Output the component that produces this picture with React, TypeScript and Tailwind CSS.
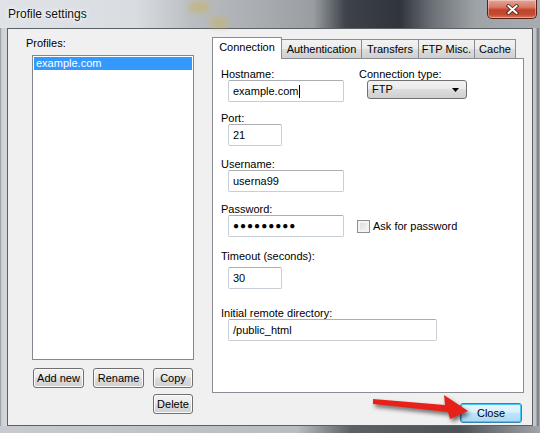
import React from 'react';

const btn =
  'h-[20px] rounded-[3px] border border-[#707070] bg-[linear-gradient(180deg,#f2f2f2_0%,#ebebeb_45%,#dddddd_50%,#cfcfcf_100%)] text-[11px] leading-[18px] text-black flex items-center justify-center shadow-[inset_0_0_0_1px_#fbfbfb]';

const input =
  'h-[22px] rounded-[2px] border border-[#c8ced6] border-t-[#abadb3] bg-white pl-[4px] flex items-center text-[11px] text-black';

const label = 'h-[11px] leading-[11px] text-[11px] text-black whitespace-nowrap';

const tab =
  'h-[19px] -ml-px border border-b-0 border-[#898c95] bg-[linear-gradient(180deg,#f2f2f2_0%,#ebebeb_50%,#dddddd_51%,#cfcfcf_100%)] text-[11px] flex items-center justify-center pt-px';

const App: React.FC = () => {
  return (
    <div className="relative w-[540px] h-[433px] overflow-hidden bg-[#c9ced3] font-['Liberation_Sans',Arial,sans-serif] text-black">
      {/* Title bar */}
      <div className="relative h-[28px] flex items-center pl-[8px] bg-[linear-gradient(90deg,#dfe3e7_0%,#d9dde1_25%,#b9bdc1_36%,#a9adb1_48%,#9a9ea2_58%,#3d4349_64%,#2f353b_74%,#6a7075_80%,#9ea3a8_88%,#a7acb1_100%)]">
        <div className="absolute left-[188px] top-[2px] w-[22px] h-[10px] rounded-full bg-[#c8b25a] opacity-60 blur-[3px]"></div>
        <div className="absolute left-[210px] top-[18px] w-[18px] h-[9px] rounded-full bg-[#c8b25a] opacity-60 blur-[3px]"></div>
        <span className="relative text-[12px] leading-[14px] text-[#111] [text-shadow:0_0_6px_#ffffff,0_0_3px_#ffffff]">Profile settings</span>
        {/* close X */}
        <div className="absolute left-[487px] top-0 w-[50px] h-[19px] rounded-b-[5px] border border-[#5b2118] border-t-0 bg-[linear-gradient(180deg,#e6a597_0%,#d67a66_40%,#c5432b_55%,#c24a30_80%,#d87a5e_100%)] flex items-center justify-center shadow-[inset_0_0_0_1px_rgba(255,255,255,0.35)]">
          <svg width="13" height="11" viewBox="0 0 13 11">
            <path d="M2.5 2 L10.5 9 M10.5 2 L2.5 9" stroke="#4a1a12" strokeWidth="3.6" strokeLinecap="square" />
            <path d="M2.5 2 L10.5 9 M10.5 2 L2.5 9" stroke="#ffffff" strokeWidth="2" strokeLinecap="square" />
          </svg>
        </div>
      </div>

      <div className="flex h-[398px]">
        {/* left frame */}
        <div className="w-[7px] bg-[linear-gradient(90deg,#8d9196_0%,#cfd3d7_25%,#d3d7db_100%)]"></div>

        {/* client area */}
        <div className="w-[526px] h-[398px] border border-[#5b6066] bg-[#f0f0f0] flex">
          {/* Profiles column */}
          <div className="ml-[18px] mt-[9px] w-[170px] flex flex-col">
            <div className={label}>Profiles:</div>
            <div className="mt-[6px] ml-[6px] w-[162px] h-[305px] border border-[#828790] bg-white p-px">
              <div className="h-[13px] bg-[#3399ff] text-white text-[11px] leading-[13px] pl-[2px]">example.com</div>
            </div>
            <div className="mt-[8px] ml-[7px] flex gap-[9px]">
              <div className={`${btn} w-[51px]`}>Add new</div>
              <div className={`${btn} w-[51px]`}>Rename</div>
              <div className={`${btn} w-[40px]`}>Copy</div>
            </div>
            <div className="mt-[6px] ml-[127px] flex">
              <div className={`${btn} w-[40px]`}>Delete</div>
            </div>
          </div>

          {/* Tabs column */}
          <div className="ml-[16px] mt-[7px] w-[312px] flex flex-col">
            <div className="flex items-end h-[22px]">
              <div className="relative z-10 w-[70px] h-[22px] mb-[-1px] border border-b-0 border-[#898c95] bg-white text-[11px] flex items-center justify-center pb-[2px]">
                Connection
              </div>
              <div className={`${tab} w-[81px]`}>Authentication</div>
              <div className={`${tab} w-[58px]`}>Transfers</div>
              <div className={`${tab} w-[57px]`}>FTP Misc.</div>
              <div className={`${tab} w-[42px]`}>Cache</div>
            </div>

            {/* Connection panel */}
            <div className="w-[312px] h-[335px] border border-[#898c95] bg-white pt-[10px] pl-[8px] flex flex-col">
              <div className="flex">
                <div className="w-[138px] flex flex-col">
                  <div className={label}>Hostname:</div>
                  <div className={`${input} ml-[7px] w-[116px] border-[#9fc3e6] border-t-[#7ea9d2]`}>
                    example.com<span className="inline-block w-px h-[13px] bg-black ml-px"></span>
                  </div>
                </div>
                <div className="flex flex-col">
                  <div className={label}>Connection type:</div>
                  <div className="ml-[8px] w-[100px] h-[19px] rounded-[3px] border border-[#707070] bg-[linear-gradient(180deg,#f2f2f2_0%,#ebebeb_45%,#dddddd_50%,#cfcfcf_100%)] flex items-center justify-between pl-[4px] pr-[6px] text-[11px]">
                    <span>FTP</span>
                    <svg width="8" height="4" viewBox="0 0 8 4">
                      <path d="M0 0 H7 L3.5 4 Z" fill="#000" />
                    </svg>
                  </div>
                </div>
              </div>

              <div className={`${label} mt-[11px]`}>Port:</div>
              <div className={`${input} ml-[7px] w-[54px]`}>21</div>

              <div className={`${label} mt-[13px]`}>Username:</div>
              <div className={`${input} ml-[7px] w-[116px]`}>userna99</div>

              <div className={`${label} mt-[12px]`}>Password:</div>
              <div className="flex items-center">
                <div className={`${input} ml-[7px] w-[116px]`}>
                  <span className="text-[10px] tracking-[1px] leading-none">●●●●●●●●●</span>
                </div>
                <div className="ml-[13px] w-[13px] h-[13px] border border-[#8e8f8f] bg-[linear-gradient(135deg,#dcdcdc_0%,#f6f6f6_100%)] shadow-[inset_0_0_0_2px_#f4f4f4]"></div>
                <span className="ml-[3px] text-[11px]">Ask for password</span>
              </div>

              <div className={`${label} mt-[14px]`}>Timeout (seconds):</div>
              <div className={`${input} ml-[7px] mt-[5px] w-[54px]`}>30</div>

              <div className={`${label} mt-[19px]`}>Initial remote directory:</div>
              <div className={`${input} ml-[7px] w-[209px]`}>/public_html</div>
            </div>

            <div className="mt-[10px] flex justify-end pr-[2px]">
              <div className="w-[62px] h-[20px] rounded-[3px] border border-[#3c7fb1] bg-[linear-gradient(180deg,#eaf6fd_0%,#d9f0fc_45%,#bee6fd_50%,#a7d9f5_100%)] shadow-[inset_0_0_0_1px_#48c6f5] text-[11px] flex items-center justify-center">
                Close
              </div>
            </div>
          </div>
        </div>

        {/* right frame */}
        <div className="w-[7px] bg-[linear-gradient(90deg,#c9cdd1_0%,#bfc3c7_40%,#6e7378_70%,#b3b7bb_100%)]"></div>
      </div>

      {/* bottom frame */}
      <div className="h-[7px] bg-[linear-gradient(90deg,#c7cbcf_0%,#b9bdc1_55%,#5c6166_65%,#4d5257_85%,#9fa4a8_100%)]"></div>

      {/* red arrow annotation */}
      <svg
        className="absolute left-[366px] top-[388px] drop-shadow-[2px_3px_2px_rgba(0,0,0,0.55)]"
        width="110"
        height="40"
        viewBox="0 0 110 40"
      >
        <path d="M7 11 L79 17 L78 7 L102 23 L84 31 L82 24 L7 16 Z" fill="#e8201a" />
      </svg>
    </div>
  );
};

export default App;
